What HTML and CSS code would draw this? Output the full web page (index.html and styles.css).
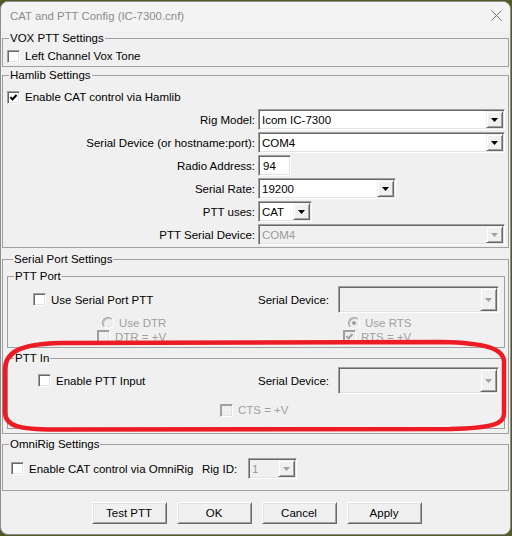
FILE: index.html
```html
<!DOCTYPE html>
<html>
<head>
    <title>CAT and PTT Config</title>
    <link rel="stylesheet" href="styles.css">
</head>
<body>
    <div class="window">
        <div class="titlebar">
            <span class="title">CAT and PTT Config (IC-7300.cnf)</span>
            <svg class="close" width="11" height="11" viewBox="0 0 11 11"><path d="M0.5 0.5 L10.5 10.5 M10.5 0.5 L0.5 10.5" stroke="#707070" stroke-width="1"/></svg>
        </div>
        <div class="content">
            <fieldset class="vox">
                <legend>VOX PTT Settings</legend>
                <label class="check first"><span class="box"></span>Left Channel Vox Tone</label>
            </fieldset>

            <fieldset class="hamlib">
                <legend>Hamlib Settings</legend>
                <label class="check first"><span class="box"><svg width="11" height="11" viewBox="0 0 11 11"><polyline points="2.5,5 4.5,7.5 8.5,3" fill="none" stroke="#000" stroke-width="2"/></svg></span>Enable CAT control via Hamlib</label>
                <div class="form">
                    <label>Rig Model:</label>
                    <div class="combo full"><span class="value">Icom IC-7300</span><span class="drop"><svg width="7" height="4"><path d="M0 0H7L3.5 4Z"/></svg></span></div>
                    <label>Serial Device (or hostname:port):</label>
                    <div class="combo full"><span class="value">COM4</span><span class="drop"><svg width="7" height="4"><path d="M0 0H7L3.5 4Z"/></svg></span></div>
                    <label>Radio Address:</label>
                    <div class="edit">94</div>
                    <label>Serial Rate:</label>
                    <div class="combo rate"><span class="value">19200</span><span class="drop"><svg width="7" height="4"><path d="M0 0H7L3.5 4Z"/></svg></span></div>
                    <label>PTT uses:</label>
                    <div class="combo uses"><span class="value">CAT</span><span class="drop"><svg width="7" height="4"><path d="M0 0H7L3.5 4Z"/></svg></span></div>
                    <label>PTT Serial Device:</label>
                    <div class="combo full disabled"><span class="value">COM4</span><span class="drop"><svg width="7" height="4"><path d="M0 0H7L3.5 4Z"/></svg></span></div>
                </div>
            </fieldset>

            <fieldset class="serial">
                <legend>Serial Port Settings</legend>
                <fieldset class="ptt-port">
                    <legend>PTT Port</legend>
                    <div class="row device-row">
                        <label class="check use-serial"><span class="box"></span>Use Serial Port PTT</label>
                        <label class="device-label">Serial Device:</label>
                        <div class="combo tall disabled"><span class="value"></span><span class="drop"><svg width="7" height="4"><path d="M0 0H7L3.5 4Z"/></svg></span></div>
                    </div>
                    <div class="row line-row radios">
                        <label class="check dim pair"><span class="radio"></span>Use DTR</label>
                        <label class="check dim"><span class="radio on"><i></i></span>Use RTS</label>
                    </div>
                    <div class="row line-row levels">
                        <label class="check dim pair"><span class="box off"></span>DTR = +V</label>
                        <label class="check dim"><span class="box off"><svg width="11" height="11" viewBox="0 0 11 11"><polyline points="2.5,5 4.5,7.5 8.5,3" fill="none" stroke="#a0a0a0" stroke-width="2"/></svg></span>RTS = +V</label>
                    </div>
                </fieldset>

                <fieldset class="ptt-in">
                    <legend>PTT In</legend>
                    <div class="row device-row">
                        <label class="check use-input"><span class="box"></span>Enable PTT Input</label>
                        <label class="device-label">Serial Device:</label>
                        <div class="combo tall disabled"><span class="value"></span><span class="drop"><svg width="7" height="4"><path d="M0 0H7L3.5 4Z"/></svg></span></div>
                    </div>
                    <div class="row line-row cts">
                        <label class="check dim"><span class="box off"></span>CTS = +V</label>
                    </div>
                </fieldset>
            </fieldset>

            <fieldset class="omnirig">
                <legend>OmniRig Settings</legend>
                <div class="row">
                    <label class="check omni-check"><span class="box"></span>Enable CAT control via OmniRig</label>
                    <label class="rig-label">Rig ID:</label>
                    <div class="combo rig disabled"><span class="value">1</span><span class="drop"><svg width="7" height="4"><path d="M0 0H7L3.5 4Z"/></svg></span></div>
                </div>
            </fieldset>

            <div class="buttons">
                <button>Test PTT</button>
                <button>OK</button>
                <button>Cancel</button>
                <button>Apply</button>
            </div>
        </div>
    </div>

    <svg class="marker" width="512" height="536" viewBox="0 0 512 536">
        <path d="M60 343 L442 342 C484 343 504 348 504 362 L504 414 C504 424 492 428 450 429 L60 429.5 C18 430 5 426 5 412 L5 370 C5 352 20 344 60 343 Z" fill="none" stroke="#ed1c24" stroke-width="4.5"/>
    </svg>
</body>
</html>
```

FILE: styles.css
```css
body {
    margin: 0;
    position: relative;
    width: 512px;
    height: 536px;
    overflow: hidden;
    background: #4f5a26;
    font-family: "Liberation Sans", Arial, sans-serif;
    font-size: 11.5px;
    color: #000;
}

.window {
    margin-top: 1px;
    width: 509px;
    height: 532px;
    border: 1px solid #8e8e8e;
    border-radius: 8px;
    background: #f0f0f0;
    overflow: hidden;
    display: flex;
    flex-direction: column;
}

.titlebar {
    height: 29px;
    flex: none;
    display: flex;
    align-items: center;
    justify-content: space-between;
    padding: 0 8px 2px 9px;
    box-sizing: border-box;
    background: #f3f3f3;
}

.title {
    color: #8c8c8c;
    font-size: 11.4px;
}

.content {
    padding: 0 1px;
    display: flex;
    flex-direction: column;
}

fieldset {
    margin: 0;
    padding: 0;
    min-width: 0;
    border: 1px solid #a0a0a0;
}

legend {
    margin-left: 6px;
    padding: 0 1px;
    line-height: 15px;
}

.row {
    display: flex;
    align-items: center;
}

.check {
    display: flex;
    align-items: center;
    height: 16px;
    white-space: nowrap;
}

.check.first {
    margin-left: 4px;
}

.dim {
    color: #a0a0a0;
}

.box {
    width: 11px;
    height: 11px;
    flex: none;
    margin-right: 5px;
    border: 1px solid;
    border-color: #a0a0a0 #fff #fff #a0a0a0;
    box-shadow: inset 1px 1px #696969, inset -1px -1px #e3e3e3;
    background: #fff;
    display: flex;
}

.box.off {
    background: #f0f0f0;
    box-shadow: inset 1px 1px #a0a0a0, inset -1px -1px #e3e3e3;
}

.radio {
    width: 10px;
    height: 10px;
    flex: none;
    margin-right: 5px;
    border: 1px solid;
    border-color: #a0a0a0 #fff #fff #a0a0a0;
    border-radius: 50%;
    box-shadow: inset 1px 1px #c0c0c0, inset -1px -1px #e3e3e3;
    background: #f0f0f0;
    display: flex;
    align-items: center;
    justify-content: center;
}

.radio i {
    width: 4px;
    height: 4px;
    border-radius: 50%;
    background: #a0a0a0;
}

/* sunken edit and combo fields */
.combo, .edit {
    height: 21px;
    box-sizing: border-box;
    padding: 1px;
    border: 1px solid;
    border-color: #a0a0a0 #fff #fff #a0a0a0;
    box-shadow: inset 1px 1px #696969, inset -1px -1px #e3e3e3;
    background: #fff;
    display: flex;
    align-items: stretch;
}

.combo .value, .edit {
    flex: 1;
    padding-left: 2px;
    display: flex;
    align-items: center;
    white-space: nowrap;
}

.edit {
    width: 33px;
    padding-left: 4px;
}

.drop {
    width: 17px;
    flex: none;
    box-sizing: border-box;
    border: 1px solid;
    border-color: #f0f0f0 #696969 #696969 #f0f0f0;
    box-shadow: inset 1px 1px #fff, inset -1px -1px #a0a0a0;
    background: #f0f0f0;
    display: flex;
    align-items: center;
    justify-content: center;
}

.drop svg {
    fill: #000;
}

.combo.disabled {
    background: #f0f0f0;
    color: #9a9a9a;
}

.combo.disabled .drop svg {
    fill: #a0a0a0;
}

.full {
    width: 247px;
}

.rate {
    width: 138px;
}

.uses {
    width: 54px;
}

.tall {
    width: 161px;
    height: 27px;
}

/* groups */
.vox {
    padding: 2px 0 2px;
}

.hamlib {
    margin-top: 1px;
    padding: 6px 0 2px;
}

.form {
    margin-top: 4px;
    display: grid;
    grid-template-columns: 252px auto;
    grid-auto-rows: 21px;
    column-gap: 3px;
    row-gap: 2px;
    justify-items: start;
}

.form label {
    justify-self: end;
    align-self: center;
}

.serial {
    margin-top: 4px;
    padding: 2px 3px 4px 4px;
}

.ptt-port {
    padding: 2px 0 4px;
}

.ptt-in {
    margin-top: 3px;
    padding: 1px 0 11px;
}

.device-row .check {
    flex: 1;
}

.use-serial {
    margin-left: 25px;
}

.use-input {
    margin-left: 30px;
}

.device-label {
    margin-right: 9px;
}

.device-row .combo {
    margin-right: 5px;
}

.line-row {
    height: 13px;
}

.radios {
    margin-top: 2px;
    height: 15px;
    padding-left: 94px;
}

.levels {
    padding-left: 89px;
}

.pair {
    width: 246px;
}

.cts {
    margin-top: 9px;
    height: 14px;
    padding-left: 212px;
}

.omnirig {
    margin-top: 3px;
    padding: 6px 0 11px;
}

.omni-check {
    width: 191px;
    margin-left: 8px;
}

.rig-label {
    width: 46px;
}

.rig {
    width: 49px;
}

.buttons {
    margin-top: 11px;
    padding-left: 2px;
    display: flex;
    justify-content: center;
    gap: 10px;
}

button {
    width: 75px;
    height: 22px;
    padding: 0;
    font: inherit;
    color: #000;
    background: #f0f0f0;
    border: 1px solid;
    border-color: #fff #696969 #696969 #fff;
    box-shadow: inset 1px 1px #e3e3e3, inset -1px -1px #a0a0a0;
}

.marker {
    position: absolute;
    top: 0;
    left: 0;
}
```
